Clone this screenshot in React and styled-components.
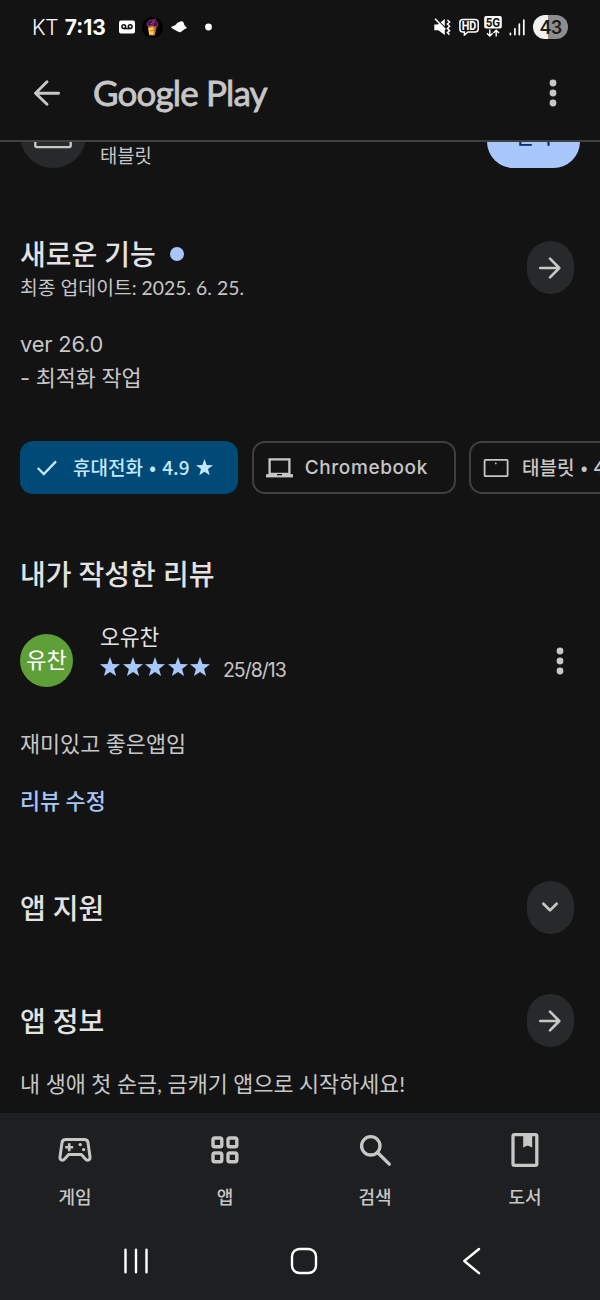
import React from 'react';
import styled, { createGlobalStyle } from 'styled-components';

const GlobalStyle = createGlobalStyle`
  * {
    box-sizing: border-box;
  }
  body {
    margin: 0;
    background-color: #131314;
  }
`;

const StyledScreen = styled.div`
  width: 600px;
  height: 1300px;
  display: flex;
  flex-direction: column;
  overflow: hidden;
  background-color: #131314;
  color: #c7c7c7;
  font-family: 'Lato', 'Noto Sans CJK KR', sans-serif;

  svg {
    display: block;
    flex: none;
  }
`;

/* Status bar */

const StyledStatusBar = styled.div`
  height: 54px;
  flex: none;
  display: flex;
  align-items: center;
  justify-content: space-between;
  padding: 0 32px;
  color: #ffffff;
  font-family: 'Inter', sans-serif;
`;

const StyledStatusGroup = styled.div`
  display: flex;
  align-items: center;
  height: 100%;
  gap: ${({ $gap }) => $gap}px;
`;

const StyledCarrier = styled.span`
  width: 25px;
  font-size: 21px;
  font-weight: 300;
  letter-spacing: -0.4px;
  white-space: nowrap;
`;

const StyledClock = styled.span`
  width: 46px;
  font-size: 21px;
  font-weight: 700;
  white-space: nowrap;
`;

const StyledBattery = styled.div`
  width: 35px;
  height: 24px;
  border-radius: 12px;
  display: flex;
  align-items: center;
  justify-content: center;
  background: linear-gradient(90deg, #f1f1f1 43%, #8d8d8d 43%);
  color: #1b1b1b;
  font-size: 18px;
  font-weight: 600;
  letter-spacing: -0.8px;
`;

/* App bar */

const StyledAppBar = styled.header`
  height: 88px;
  flex: none;
  display: flex;
  align-items: center;
  padding: 0 43px 8px 32px;
  border-bottom: 2px solid #3f4041;
`;

const StyledLogo = styled.div`
  flex: 1;
  margin: -2px 0 0 31px;
  font-size: 35px;
  line-height: 44px;
  font-weight: 400;
  letter-spacing: -0.85px;
  -webkit-text-stroke: 0.8px #c7c7c7;
`;

/* Page body */

const StyledContent = styled.main`
  height: 971px;
  flex: none;
  overflow: hidden;
  display: flex;
  flex-direction: column;
`;

const StyledDeviceRow = styled.div`
  display: flex;
  align-items: flex-end;
  height: 25.5px;
  padding: 0 20px;
`;

const StyledDeviceIcon = styled.div`
  width: 66px;
  height: 66px;
  border-radius: 50%;
  background-color: #28292a;
  display: flex;
  align-items: center;
  justify-content: center;
`;

const StyledDeviceName = styled.div`
  flex: 1;
  margin-left: 14px;
  font-size: 18.8px;
  line-height: 24px;
`;

const StyledInstallButton = styled.div`
  width: 93px;
  height: 53px;
  border-radius: 27px;
  background-color: #a8c7fa;
  color: #062e6f;
  font-size: 20px;
  line-height: 42px;
  font-weight: 500;
  text-align: center;
`;

const StyledSection = styled.section`
  display: flex;
  align-items: center;
  justify-content: space-between;
  height: 53px;
  margin-top: ${({ $top }) => $top}px;
  padding: 0 26.5px 0 20px;
`;

const StyledTitle = styled.h2`
  margin: 0;
  display: flex;
  align-items: center;
  gap: 14px;
  color: #e3e3e3;
  font-size: 28px;
  line-height: 36px;
  font-weight: 500;
`;

const StyledReviewTitle = styled(StyledTitle)`
  margin: 62px 20px 0;
`;

const StyledNewDot = styled.span`
  width: 14px;
  height: 14px;
  border-radius: 50%;
  background-color: #a8c7fa;
`;

const StyledHeading = styled.div`
  padding-top: 3px;
`;

const StyledUpdated = styled.div`
  font-size: 19.3px;
  line-height: 31px;
  letter-spacing: 0.05px;
`;

const StyledRoundButton = styled.div`
  width: 47px;
  height: 53px;
  border-radius: 24px;
  background-color: #28292b;
  display: flex;
  align-items: center;
  justify-content: center;
`;

const StyledBody = styled.p`
  margin: ${({ $top }) => $top}px 20px 0;
  font-size: 21.8px;
  line-height: 34px;
  white-space: pre-line;
`;

const StyledNotes = styled(StyledBody)`
  font-family: 'Inter', 'Noto Sans CJK KR', sans-serif;
  letter-spacing: -0.15px;
`;

const StyledChips = styled.div`
  display: flex;
  gap: 13.4px;
  margin-top: 46px;
  padding-left: 20px;
`;

const StyledChip = styled.div`
  flex: none;
  width: ${({ $width }) => $width}px;
  height: 53px;
  padding-left: ${({ $selected }) => ($selected ? 16 : 12)}px;
  border: ${({ $selected }) => ($selected ? 'none' : '2px solid #3f4041')};
  border-radius: 13px;
  background-color: ${({ $selected }) => ($selected ? '#004a77' : 'transparent')};
  color: ${({ $selected }) => ($selected ? '#c2e7ff' : '#c7c7c7')};
  display: flex;
  align-items: center;
  font-size: 19px;
  font-weight: 500;
  white-space: nowrap;
`;

const StyledChipLabel = styled.span`
  margin-left: ${({ $left }) => $left}px;
  margin-right: 6px;
  padding-bottom: ${({ $latin }) => ($latin ? 0 : 2)}px;
  font-family: ${({ $latin }) => ($latin ? "'Inter'" : "'Noto Sans CJK KR'")}, sans-serif;
  letter-spacing: ${({ $latin }) => ($latin ? 0.6 : 0)}px;
  word-spacing: 2px;
`;

const StyledReviewer = styled.div`
  display: flex;
  height: 62px;
  margin-top: 33px;
  padding: 0 36px 0 20px;
`;

const StyledAvatar = styled.div`
  width: 53px;
  height: 53px;
  margin-top: 9px;
  border-radius: 50%;
  background-color: #5f9f37;
  color: #ffffff;
  font-size: 22px;
  line-height: 52px;
  text-align: center;
`;

const StyledReviewerInfo = styled.div`
  flex: 1;
  margin-left: 27px;
`;

const StyledReviewerName = styled.div`
  color: #e3e3e3;
  font-size: 21.5px;
  line-height: 24px;
`;

const StyledRating = styled.div`
  display: flex;
  align-items: center;
  gap: 2.6px;
  height: 36px;
`;

const StyledDate = styled.span`
  margin: 6px 0 0 10px;
  font-family: 'Inter', sans-serif;
  font-size: 19.5px;
  letter-spacing: -1px;
`;

const StyledMore = styled.div`
  margin-top: 22px;
`;

const StyledLink = styled.div`
  margin: 23px 20px 0;
  color: #a8c7fa;
  font-size: 21.8px;
  line-height: 34px;
  font-weight: 500;
`;

/* Bottom bars */

const StyledTabs = styled.nav`
  height: 111px;
  flex: none;
  display: flex;
  background-color: #1e1f20;
`;

const StyledTab = styled.div`
  width: 150px;
  display: flex;
  flex-direction: column;
  align-items: center;
  padding-top: 19px;
  gap: 16px;
  font-size: 18px;
  line-height: 26px;
  font-weight: 500;
`;

const StyledSystemBar = styled.div`
  height: 76px;
  flex: none;
  display: flex;
  padding: 0 44px 2px 52px;
  background-color: #1e1f20;
`;

const StyledSystemKey = styled.div`
  flex: 1;
  display: flex;
  align-items: center;
  justify-content: center;
`;

const STAR = 'M10 0 L12.5 7 L20 7.3 L14.1 11.9 L16.1 19 L10 14.9 L3.9 19 L5.9 11.9 L0 7.3 L7.5 7 Z';

const Star = ({ size = 20, color = '#a8c7fa' }) => (
  <svg width={size} height={size} viewBox="0 0 20 20" fill={color}>
    <path d={STAR} />
  </svg>
);

const MoreIcon = () => (
  <svg width="8" height="28" viewBox="0 0 8 28" fill="#c7c7c7">
    <circle cx="4" cy="4" r="3.4" />
    <circle cx="4" cy="14" r="3.4" />
    <circle cx="4" cy="24" r="3.4" />
  </svg>
);

const BackArrow = () => (
  <svg width="30" height="28" viewBox="0 0 30 28" fill="none" stroke="#c7c7c7" strokeWidth="2.9" strokeLinecap="round" strokeLinejoin="round">
    <path d="M26.6 14.2 H3.5 M15 2.7 L3.5 14.2 L15 25.2" />
  </svg>
);

const ForwardArrow = () => (
  <svg width="24" height="24" viewBox="0 0 24 24" fill="none" stroke="#c7c7c7" strokeWidth="2.6" strokeLinecap="round" strokeLinejoin="round">
    <path d="M2.2 12 H21 M12 2.7 L21.3 12 L12 21.3" />
  </svg>
);

const ChevronDown = () => (
  <svg width="20" height="12" viewBox="0 0 20 12" fill="none" stroke="#c7c7c7" strokeWidth="2.7" strokeLinecap="round" strokeLinejoin="round">
    <path d="M3.4 1.8 L10 8.4 L16.6 1.8" />
  </svg>
);

const StatusLeftIcons = () => (
  <>
    <svg width="16" height="14" viewBox="0 0 16 14">
      <rect x="0" y="0.5" width="16" height="13" rx="2" fill="#fff" />
      <g fill="none" stroke="#131314" strokeWidth="1.5">
        <circle cx="4.8" cy="6.6" r="1.9" />
        <circle cx="11.2" cy="6.6" r="1.9" />
        <path d="M4.8 8.6 H11.2" />
      </g>
    </svg>
    <svg width="21" height="21" viewBox="0 0 21 21">
      <circle cx="10.5" cy="10.5" r="10.5" fill="#000" />
      <path d="M6 9 L15 8.5 L12.6 18.6 L7 18.2 Z" fill="#d9822e" />
      <path d="M6.3 11 L11 10.5 L11.6 17.8 L7.4 17.6 Z" fill="#f2d34b" />
      <path d="M5 8.5 C4.5 4.5 8 2.5 11 3 C14.5 3.2 16.5 6 15.5 8.7 L12.5 10 L11 7.5 L8 9.3 Z" fill="#3a1545" stroke="#a12f86" strokeWidth="1" />
      <path d="M10 5.5 L14 1.6 M8 7 L12.8 5.2 M13.8 10.5 L12.8 14.5" fill="none" stroke="#b63a78" strokeWidth="1" />
      <path d="M8 14 L11 13.4" stroke="#d07b20" strokeWidth="1" />
    </svg>
    <svg width="17" height="12" viewBox="0 0 17 12" fill="#fff">
      <path d="M0.6 7 Q-0.2 6.2 1 5.6 L4.2 4.2 Q5.6 1.6 9.4 0.5 Q11.8 -0.1 12.6 1.8 L13.6 4.6 L15.6 6.4 Q16.2 7.2 15 7.5 L13.4 8.2 L10.2 10.8 Q9.2 11.5 7.8 11 L3.5 8.8 Z" />
    </svg>
    <svg width="27" height="8" viewBox="0 0 27 8" fill="#fff">
      <circle cx="12.5" cy="4" r="3.4" />
    </svg>
  </>
);

const StatusRightIcons = () => (
  <>
    <svg width="19" height="18" viewBox="0 0 19 18" fill="#fff">
      <path d="M0.3 6.5 H3.5 L5.2 5.3 L10.8 11 V17 L4.3 12.2 H0.3 Z" />
      <path d="M6.6 4.2 L10.8 1 V8.2 Z" />
      <path d="M1 0.8 L11.5 11.5" stroke="#fff" strokeWidth="1.5" />
      <path d="M13.4 2 L15.6 4 L13.4 6 L15.6 8.2 L13.4 10.4 L15.6 12.6 L13.4 14.6 L15.4 16.6" fill="none" stroke="#fff" strokeWidth="1.5" />
    </svg>
    <svg width="20" height="18" viewBox="0 0 20 18">
      <path d="M4 1.4 H16 Q19.2 1.4 19.2 4.4 V11 Q19.2 14 16 14 H9 L5.4 17 V14 H4 Q0.9 14 0.9 11 V4.4 Q0.9 1.4 4 1.4 Z" fill="none" stroke="#fff" strokeWidth="1.5" />
      <text x="10" y="12.2" fill="#fff" fontSize="12.5" fontWeight="700" fontFamily="Roboto, sans-serif" textAnchor="middle" textLength="14.6" lengthAdjust="spacingAndGlyphs">HD</text>
    </svg>
    <svg width="19.5" height="22" viewBox="0 0 19.5 22">
      <rect x="0.2" y="0" width="17.6" height="12.6" rx="1.8" fill="#fff" />
      <text x="9" y="11" fill="#131314" fontSize="13.2" fontWeight="700" fontFamily="Roboto, sans-serif" textAnchor="middle" textLength="14.5" lengthAdjust="spacingAndGlyphs">5G</text>
      <path d="M5.8 13.6 V20 M3 17.2 L5.8 20 L8.6 17.2 M12.2 20.6 V14.2 M9.4 17 L12.2 14.2 L15 17" fill="none" stroke="#fff" strokeWidth="1.4" />
    </svg>
    <svg width="18.5" height="17" viewBox="0 0 18.5 17" stroke="#fff" strokeWidth="1.7" strokeLinecap="round">
      <path d="M1.4 14.4 V15.6 M5.9 9.8 V15.6 M10.3 5.2 V15.6 M14.8 1.2 V15.6" />
    </svg>
  </>
);

const GameIcon = () => (
  <svg width="36" height="36" viewBox="0 0 36 36" fill="none" stroke="#c7c7c7">
    <path d="M8.6 7.6 H27.4 Q30.4 7.6 31 10.6 L33 25 Q33.2 28.2 30.6 28.2 Q29.4 28.2 28.6 27.3 L24.4 22.6 H11.6 L7.4 27.3 Q6.6 28.2 5.4 28.2 Q2.8 28.2 3 25 L5 10.6 Q5.6 7.6 8.6 7.6 Z" strokeWidth="3" strokeLinejoin="round" />
    <path d="M12.2 11.2 V19.2 M8.2 15.2 H16.2" strokeWidth="2.6" />
    <circle cx="23.2" cy="12.6" r="1.7" fill="#c7c7c7" stroke="none" />
    <circle cx="26.6" cy="17.6" r="1.7" fill="#c7c7c7" stroke="none" />
  </svg>
);

const AppsIcon = () => (
  <svg width="36" height="36" viewBox="0 0 36 36" fill="none" stroke="#c7c7c7" strokeWidth="3.4">
    <rect x="6" y="6" width="8.8" height="8.8" rx="1.8" />
    <rect x="21" y="6" width="8.8" height="8.8" rx="1.8" />
    <rect x="6" y="21" width="8.8" height="8.8" rx="1.8" />
    <rect x="21" y="21" width="8.8" height="8.8" rx="1.8" />
  </svg>
);

const SearchIcon = () => (
  <svg width="36" height="36" viewBox="0 0 36 36" fill="none" stroke="#c7c7c7" strokeWidth="3.3" strokeLinecap="round">
    <circle cx="13.8" cy="13.8" r="9.2" />
    <path d="M20.5 20.5 L32.3 32.2" />
  </svg>
);

const BookIcon = () => (
  <svg width="36" height="36" viewBox="0 0 36 36">
    <rect x="6" y="2.7" width="23.8" height="30.6" rx="1.6" fill="none" stroke="#c7c7c7" strokeWidth="3.3" />
    <path d="M16.2 3 H25.2 V15.4 L20.7 13.6 L16.2 15.4 Z" fill="#c7c7c7" />
  </svg>
);

const tabs = [
  { label: '게임', Icon: GameIcon },
  { label: '앱', Icon: AppsIcon },
  { label: '검색', Icon: SearchIcon },
  { label: '도서', Icon: BookIcon },
];

const App = () => {
  return (
    <StyledScreen>
      <GlobalStyle />
      <StyledStatusBar>
        <StyledStatusGroup $gap={7.8}>
          <StyledCarrier>KT</StyledCarrier>
          <StyledClock>7:13</StyledClock>
          <StatusLeftIcons />
        </StyledStatusGroup>
        <StyledStatusGroup $gap={5.5}>
          <StatusRightIcons />
          <StyledBattery>43</StyledBattery>
        </StyledStatusGroup>
      </StyledStatusBar>

      <StyledAppBar>
        <BackArrow />
        <StyledLogo>Google Play</StyledLogo>
        <MoreIcon />
      </StyledAppBar>

      <StyledContent>
        <StyledDeviceRow>
          <StyledDeviceIcon>
            <svg width="38" height="28" viewBox="0 0 38 28" fill="none" stroke="#c7c7c7" strokeWidth="2.4">
              <rect x="1.3" y="1.3" width="35.4" height="24.8" rx="1.5" />
            </svg>
          </StyledDeviceIcon>
          <StyledDeviceName>태블릿</StyledDeviceName>
          <StyledInstallButton>설치</StyledInstallButton>
        </StyledDeviceRow>

        <StyledSection $top={73.5}>
          <StyledHeading>
            <StyledTitle>새로운 기능 <StyledNewDot /></StyledTitle>
            <StyledUpdated>최종 업데이트: 2025. 6. 25.</StyledUpdated>
          </StyledHeading>
          <StyledRoundButton><ForwardArrow /></StyledRoundButton>
        </StyledSection>

        <StyledNotes $top={33}>{'ver 26.0\n- 최적화 작업'}</StyledNotes>

        <StyledChips>
          <StyledChip $selected $width={218.3}>
            <svg width="22" height="18" viewBox="0 0 22 18" fill="none" stroke="#c2e7ff" strokeWidth="2.3">
              <path d="M1.8 9 L7.8 15 L20 2.4" />
            </svg>
            <StyledChipLabel $left={15}>휴대전화 • 4.9</StyledChipLabel>
            <Star size={17} color="#c2e7ff" />
          </StyledChip>
          <StyledChip $width={204}>
            <svg width="27" height="20" viewBox="0 0 27 20">
              <path d="M3.6 1.3 H23.4 V16 H3.6 Z" fill="none" stroke="#c7c7c7" strokeWidth="2.3" />
              <path d="M0 16.2 H27 V19.4 H0 Z" fill="#c7c7c7" />
              <path d="M11 16 H16 V17.3 H11 Z" fill="#131314" />
            </svg>
            <StyledChipLabel $latin $left={12}>Chromebook</StyledChipLabel>
          </StyledChip>
          <StyledChip $width={204}>
            <svg width="26" height="20" viewBox="0 0 26 20">
              <rect x="1.6" y="1.8" width="23" height="16.4" rx="1" fill="none" stroke="#c7c7c7" strokeWidth="1.8" />
              <circle cx="12.8" cy="5.4" r="0.9" fill="#c7c7c7" />
            </svg>
            <StyledChipLabel $left={13}>태블릿 • 4.9</StyledChipLabel>
            <Star size={17} color="#c7c7c7" />
          </StyledChip>
        </StyledChips>

        <StyledReviewTitle>내가 작성한 리뷰</StyledReviewTitle>
        <StyledReviewer>
          <StyledAvatar>유찬</StyledAvatar>
          <StyledReviewerInfo>
            <StyledReviewerName>오유찬</StyledReviewerName>
            <StyledRating>
              {[1, 2, 3, 4, 5].map((n) => <Star key={n} />)}
              <StyledDate>25/8/13</StyledDate>
            </StyledRating>
          </StyledReviewerInfo>
          <StyledMore><MoreIcon /></StyledMore>
        </StyledReviewer>
        <StyledBody $top={40}>재미있고 좋은앱임</StyledBody>
        <StyledLink>리뷰 수정</StyledLink>

        <StyledSection $top={63}>
          <StyledTitle>앱 지원</StyledTitle>
          <StyledRoundButton><ChevronDown /></StyledRoundButton>
        </StyledSection>
        <StyledSection $top={60}>
          <StyledTitle>앱 정보</StyledTitle>
          <StyledRoundButton><ForwardArrow /></StyledRoundButton>
        </StyledSection>
        <StyledBody $top={20}>내 생애 첫 순금, 금캐기 앱으로 시작하세요!</StyledBody>
      </StyledContent>

      <StyledTabs>
        {tabs.map(({ label, Icon }) => (
          <StyledTab key={label}>
            <Icon />
            {label}
          </StyledTab>
        ))}
      </StyledTabs>

      <StyledSystemBar>
        <StyledSystemKey>
          <svg width="26" height="28" viewBox="0 0 26 28" stroke="#fff" strokeWidth="2.4" strokeLinecap="round">
            <path d="M2.5 2.8 V25.2 M13 2.8 V25.2 M23.5 2.8 V25.2" />
          </svg>
        </StyledSystemKey>
        <StyledSystemKey>
          <svg width="28" height="28" viewBox="0 0 28 28" fill="none" stroke="#fff" strokeWidth="2.4">
            <rect x="2" y="2" width="24" height="24" rx="7.5" />
          </svg>
        </StyledSystemKey>
        <StyledSystemKey>
          <svg width="20" height="28" viewBox="0 0 20 28" fill="none" stroke="#fff" strokeWidth="2.4" strokeLinecap="round" strokeLinejoin="round">
            <path d="M17 2 L2.3 14 L17 26.2" />
          </svg>
        </StyledSystemKey>
      </StyledSystemBar>
    </StyledScreen>
  );
};

export default App;
